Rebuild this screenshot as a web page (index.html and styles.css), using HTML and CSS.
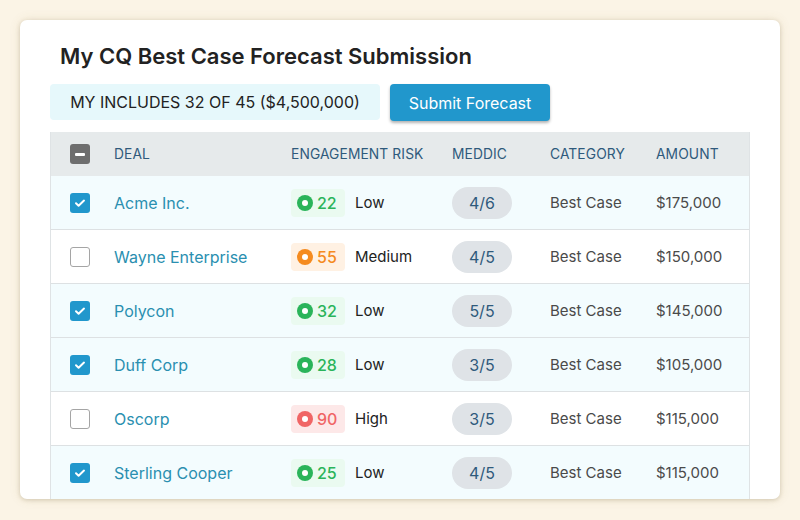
FILE: index.html
```html
<!DOCTYPE html>
<html>
<head>
<meta charset="utf-8">
<link rel="stylesheet" href="styles.css">
</head>
<body>
<div class="card">
  <h1 class="title">My CQ Best Case Forecast Submission</h1>
  <div class="toolbar">
    <div class="includes">MY INCLUDES 32 OF 45 ($4,500,000)</div>
    <button class="submit">Submit Forecast</button>
  </div>
  <div class="table">
    <div class="row head">
      <div><span class="cb cb-minus"></span></div>
      <div>DEAL</div>
      <div>ENGAGEMENT RISK</div>
      <div>MEDDIC</div>
      <div>CATEGORY</div>
      <div>AMOUNT</div>
    </div>
    <div class="row sel">
      <div><span class="cb cb-on"><svg viewBox="0 0 20 20"><path d="M6 10.2l2.6 2.5L14 7.6"/></svg></span></div>
      <div class="deal">Acme Inc.</div>
      <div class="risk"><span class="badge green"><i></i>22</span><span class="lvl">Low</span></div>
      <div><span class="pill">4/6</span></div>
      <div class="muted">Best Case</div>
      <div class="muted">$175,000</div>
    </div>
    <div class="row">
      <div><span class="cb"></span></div>
      <div class="deal">Wayne Enterprise</div>
      <div class="risk"><span class="badge orange"><i></i>55</span><span class="lvl">Medium</span></div>
      <div><span class="pill">4/5</span></div>
      <div class="muted">Best Case</div>
      <div class="muted">$150,000</div>
    </div>
    <div class="row sel">
      <div><span class="cb cb-on"><svg viewBox="0 0 20 20"><path d="M6 10.2l2.6 2.5L14 7.6"/></svg></span></div>
      <div class="deal">Polycon</div>
      <div class="risk"><span class="badge green"><i></i>32</span><span class="lvl">Low</span></div>
      <div><span class="pill">5/5</span></div>
      <div class="muted">Best Case</div>
      <div class="muted">$145,000</div>
    </div>
    <div class="row sel">
      <div><span class="cb cb-on"><svg viewBox="0 0 20 20"><path d="M6 10.2l2.6 2.5L14 7.6"/></svg></span></div>
      <div class="deal">Duff Corp</div>
      <div class="risk"><span class="badge green"><i></i>28</span><span class="lvl">Low</span></div>
      <div><span class="pill">3/5</span></div>
      <div class="muted">Best Case</div>
      <div class="muted">$105,000</div>
    </div>
    <div class="row">
      <div><span class="cb"></span></div>
      <div class="deal">Oscorp</div>
      <div class="risk"><span class="badge red"><i></i>90</span><span class="lvl">High</span></div>
      <div><span class="pill">3/5</span></div>
      <div class="muted">Best Case</div>
      <div class="muted">$115,000</div>
    </div>
    <div class="row sel">
      <div><span class="cb cb-on"><svg viewBox="0 0 20 20"><path d="M6 10.2l2.6 2.5L14 7.6"/></svg></span></div>
      <div class="deal">Sterling Cooper</div>
      <div class="risk"><span class="badge green"><i></i>25</span><span class="lvl">Low</span></div>
      <div><span class="pill">4/5</span></div>
      <div class="muted">Best Case</div>
      <div class="muted">$115,000</div>
    </div>
  </div>
</div>
</body>
</html>
```

FILE: styles.css
```css
* { box-sizing: border-box; }
html, body { margin: 0; padding: 0; }
body {
  background: #fbf4e6;
  font-family: Inter, "Noto Sans", sans-serif;
  width: 800px;
  height: 520px;
  overflow: hidden;
  padding: 20px;
}
.card {
  width: 760px;
  height: 479px;
  background: #fff;
  border-radius: 7px;
  box-shadow: 0 1px 4px rgba(120, 100, 60, 0.28), 0 0 12px rgba(150, 120, 60, 0.12);
  padding: 0 30px;
  overflow: hidden;
}
.title {
  margin: 0;
  padding: 22px 0 0 10px;
  height: 64px;
  font-size: 22px;
  font-weight: 600;
  color: #222;
  line-height: 28px;
}
.toolbar {
  display: flex;
  gap: 10px;
  height: 36px;
  margin-bottom: 12px;
}
.includes {
  width: 330px;
  background: #e6f8fb;
  border-radius: 4px;
  display: flex;
  align-items: center;
  justify-content: center;
  font-size: 16px;
  color: #222;
}
.submit {
  width: 160px;
  height: 37px;
  border: 0;
  border-radius: 4px;
  background: #2197cc;
  color: #fff;
  font-family: inherit;
  font-size: 16px;
  box-shadow: 0 2px 3px rgba(0, 0, 0, 0.3);
  padding: 0;
}
.table {
  width: 700px;
  border-left: 1px solid #dfe3e5;
  border-right: 1px solid #dfe3e5;
}
.row {
  display: grid;
  grid-template-columns: 44px 177px 161px 98px 106px 1fr;
  padding-left: 19px;
  height: 54px;
  align-items: center;
  border-bottom: 1px solid #dde1e3;
  background: #fff;
  font-size: 15px;
}
.row.sel { background: #f3fcfe; }
.row.head {
  height: 44px;
  background: #e6eaeb;
  border-bottom: 0;
  font-size: 13.8px;
  color: #2f5a7c;
  letter-spacing: 0.1px;
}
.cb {
  display: block;
  width: 20px;
  height: 20px;
  border-radius: 3px;
  border: 1.5px solid #a5a5a5;
  background: #fff;
}
.cb-on {
  border: 0;
  background: #2197cc;
}
.cb-on svg { display: block; width: 20px; height: 20px; }
.cb-on path { fill: none; stroke: #fff; stroke-width: 2; stroke-linecap: round; stroke-linejoin: round; }
.cb-minus {
  border: 0;
  background: #6e6e6e;
  position: relative;
}
.cb-minus::after {
  content: "";
  position: absolute;
  left: 5px;
  top: 9px;
  width: 10px;
  height: 2.5px;
  background: #fff;
  border-radius: 1px;
}
.deal {
  color: #2a8fb0;
  font-size: 16px;
  padding-top: 1px;
}
.risk { display: flex; align-items: center; }
.badge {
  display: flex;
  align-items: center;
  width: 54px;
  height: 28px;
  border-radius: 4px;
  padding-left: 6px;
  font-size: 16px;
  font-weight: 500;
  gap: 4px;
}
.badge i {
  width: 16px;
  height: 16px;
  border-radius: 50%;
  background: currentColor;
  position: relative;
}
.badge i::after {
  content: "";
  position: absolute;
  left: 5px;
  top: 5px;
  width: 6px;
  height: 6px;
  border-radius: 50%;
  background: #fff;
}
.green { background: #eafaf0; color: #2ab45a; }
.orange { background: #fff1e3; color: #f58b1f; }
.red { background: #fde8e8; color: #f06565; }
.lvl { margin-left: 10px; color: #222; }
.pill {
  display: flex;
  align-items: center;
  justify-content: center;
  width: 60px;
  height: 32px;
  border-radius: 16px;
  background: #dfe3e7;
  color: #2f5a7c;
  font-size: 16px;
}
.muted { color: #4a4a4a; }
```
